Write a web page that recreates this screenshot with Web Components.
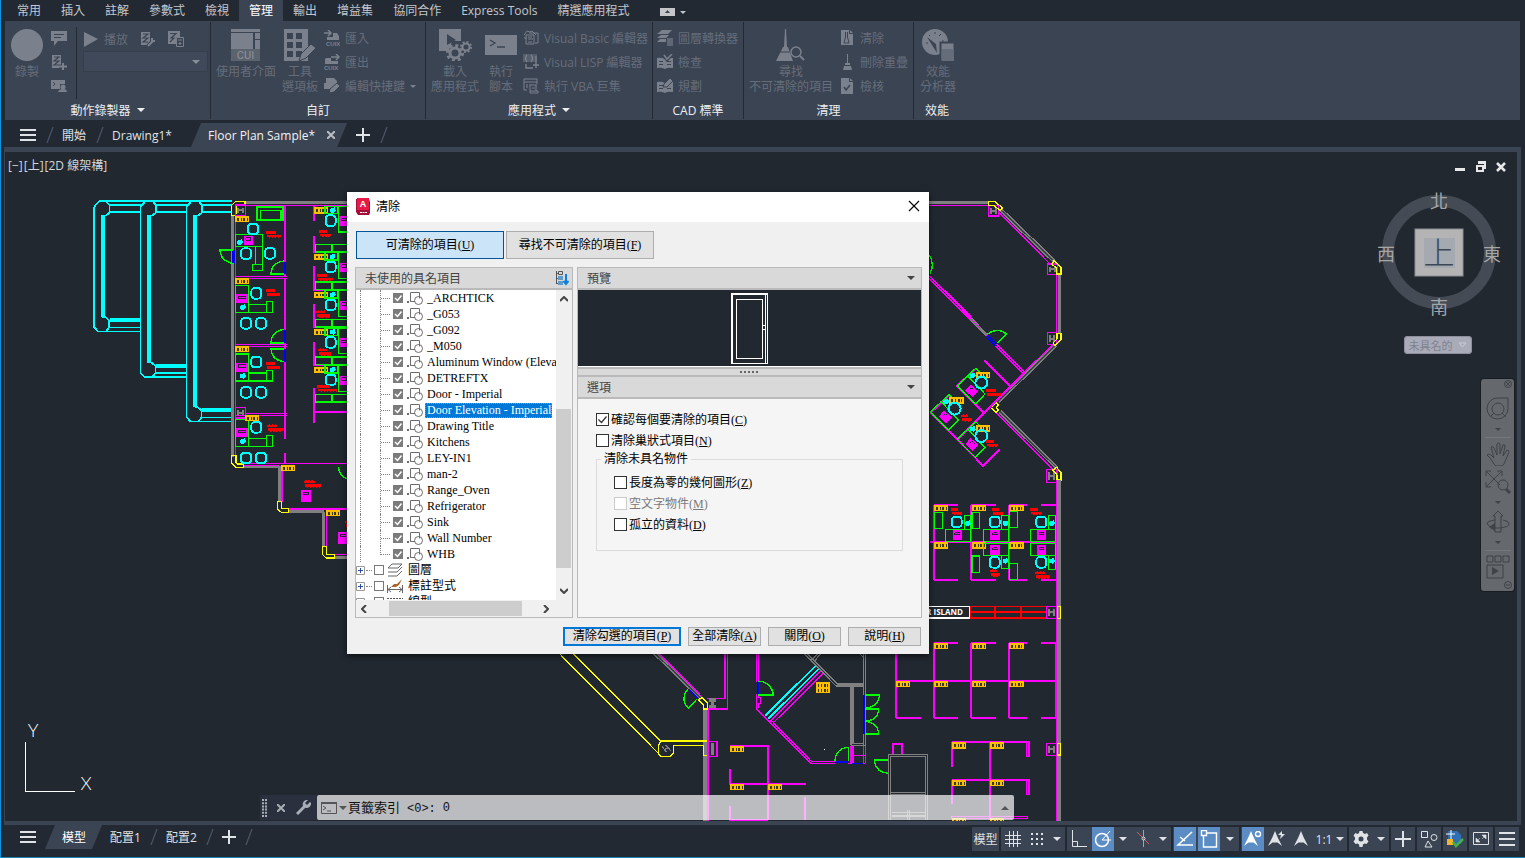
<!DOCTYPE html>
<html lang="zh-Hant">
<head>
<meta charset="utf-8">
<title>Floor Plan Sample</title>
<style>
html, body { margin: 0; height: 100%; background: #222933; }
body { font: 12px/15px "Open Sans", "Noto Sans CJK TC", sans-serif; overflow: hidden; }
</style>
</head>
<body>
<cad-app></cad-app>

<script>
/* ---------- base ---------- */
class UiElement extends HTMLElement {
  constructor() {
    super();
    this.attachShadow({ mode: 'open' });
  }
  connectedCallback() {
    if (!this.shadowRoot.firstChild) {
      this.shadowRoot.innerHTML =
        '<style>*{box-sizing:border-box}button{font:inherit;color:inherit;background:none;border:0;padding:0;margin:0}' +
        this.css() + '</style>' + this.html();
    }
  }
  css() { return ''; }
  html() { return '<slot></slot>'; }
}

/* ---------- icons ---------- */
const macroDoc = '<path d="M1 1h9v13H1z"/><path d="M3 3h5l-5 4h5l-5 4h5" fill="none" stroke="#3b4453" stroke-width="1.2"/>';
const person = 'M7 0l2.500 6 4.500 9-4.500-3.500h-5L0 15 4.500 6z';
const ICONS = {
  record: [34, 34, '<circle cx="17" cy="17" r="16"/>'],
  chat: [16, 16, '<path d="M0 1h16v10H7l-4 5v-5H0z"/><path d="M3 4.500h10M3 7.500h7" stroke="#3b4453"/>'],
  macroAdd: [16, 16, macroDoc + '<path d="M12 9v7M8 12.500h8" stroke="#3b4453" stroke-width="4"/><path d="M12 9v7M8 12.500h8" stroke="currentColor" stroke-width="2"/>'],
  macroUser: [16, 16, '<path d="M0 2h14v4H9v5H0z"/><path d="M2 4l2 2-2 2" fill="none" stroke="#3b4453"/><circle cx="12" cy="9" r="2.500"/><path d="M7 14q1-3 5-3t4 3z"/>'],
  play: [16, 16, '<path d="M1 1l14 7-14 8z"/>'],
  macroWrench: [16, 16, macroDoc + '<path d="M8 15l5-5M12 7v3h3" fill="none" stroke="#3b4453" stroke-width="4"/><path d="M8 15l5-5M12 7v3h3" fill="none" stroke="currentColor" stroke-width="2"/>'],
  macroCalc: [16, 16, '<path d="M0 0h12v6H8v7H0z"/><path d="M2 2.500h6L3 7h3l-4 4" fill="none" stroke="#3b4453" stroke-width="1.200"/><path d="M8.500 6.500h7v9h-7zM10 9h4M12 11v3M10.500 12.500h3" fill="none" stroke="currentColor"/>'],
  cui: [30, 32, '<path d="M0 0h29v3H0zM0 4h22v16H0zM24 4h5v6h-5zM24 11h5v9h-5z"/><path d="M0 20h29v12H0z" opacity=".5"/><text x="14.500" y="30" text-anchor="middle" font-family="Roboto" font-size="11" fill="#8f949d">CUI</text>'],
  palette: [32, 32, '<path fill-rule="evenodd" d="M0 0h24v32H0zM3 4v6h6V4zm9 0v6h6V4zM3 13v6h6v-6zm9 0v6h6v-6zM3 22v6h6v-6zm9 0v6h6v-6z"/><path d="M17 25l10-10 5 4-10 10-7 3z" stroke="#3b4453"/>'],
  imp: [16, 16, '<path d="M0 3h7M4 0l3 3-3 3" fill="none" stroke="currentColor" stroke-width="1.500"/><path d="M9 3h4l2 3v4H3V7h6z"/><text x="2" y="16" font-family="Liberation Sans" font-size="6" font-weight="700" fill="currentColor">CUIX</text>'],
  exp: [16, 16, '<path d="M7 3h8M12 0l3 3-3 3" fill="none" stroke="currentColor" stroke-width="1.500"/><path d="M2 4h5v3h7v3H1V5z"/><text x="0" y="16" font-family="Liberation Sans" font-size="6" font-weight="700" fill="currentColor">CUIX</text>'],
  alias: [16, 16, '<path d="M2 0h8l3 3v2H2zM0 5h12v6H0z"/><path d="M5 15l1-4 7-6 3 3-6 6z" stroke="#3b4453"/>'],
  loadApp: [33, 32, '<path d="M0 0h22v12h-9l-3 10H0z"/><path d="M8 5l9 6-9 5z" fill="#3b4453"/><g fill="none" stroke="currentColor"><circle cx="16" cy="24" r="5" stroke-width="3"/><circle cx="16" cy="24" r="7.500" stroke-width="3" stroke-dasharray="3 2.900"/><circle cx="27" cy="18" r="3.500" stroke-width="2"/><circle cx="27" cy="18" r="5" stroke-width="2" stroke-dasharray="2 1.900"/></g>'],
  script: [32, 32, '<path d="M0 6h32v20H0z"/><path d="M5 11l5 3-5 3M12 18h8" fill="none" stroke="#3b4453" stroke-width="1.300"/>'],
  vb: [16, 16, '<path d="M1 5l3-4 3 1 2-1 4 4M3 5h8v9H3zM1 8h3M6 3h9v10h-3M5 7h4M5 9h5M5 12h4" fill="none" stroke="currentColor"/>'],
  lisp: [16, 16, '<path d="M0 0h14v8H0z" opacity=".45"/><path d="M4 1q-3 3 0 7M8 1q3 3 0 7M13 2v7M10 11h6M3 10v4h7M13 9v5" fill="none" stroke="currentColor" stroke-width="1.400"/>'],
  vba: [16, 16, '<path d="M1 1h13v3H1zM1 4v8h3M14 4v2M6 7h8M3 7h2M3 9h2M7 7v8h8v-2H7M13 7v6M9 10h3" fill="none" stroke="currentColor"/>'],
  layers: [16, 16, '<path d="M5 0h10l-4 4H0zM4 5h8l-3 3H0zM3 9h6v3H0z"/><path d="M10 8h6v8h-6z" opacity=".6"/>'],
  check: [16, 16, '<path fill-rule="evenodd" d="M0 4q4-1 8 1 3-2 8-1v10q-5-1-8 1-4-2-8-1zM2 7v1h4V7zm0 3v1h4v-1zm8-3v1h4V7zm0 3v1h4v-1z"/><path d="M7 1l3 4 5-5" fill="none" stroke="#3b4453" stroke-width="4"/><path d="M7 1l3 4 5-5" fill="none" stroke="currentColor" stroke-width="1.500"/>'],
  plan: [16, 16, '<path fill-rule="evenodd" d="M0 4q4-1 8 1 3-2 8-1v10q-5-1-8 1-4-2-8-1zM2 7v1h4V7zm0 3v1h4v-1zm8 0v1h4v-1z"/><path d="M6 9l1-3 6-6 3 3-6 6z" stroke="#3b4453"/>'],
  broom: [30, 32, '<path d="M9 0h1l1 18h-3zM7 18h5l5 14H0z"/><path d="M4 23h11" stroke="#3b4453"/><circle cx="20" cy="23" r="5" fill="#3b4453" stroke="currentColor" stroke-width="1.500"/><path d="M24 27l4 4" stroke="currentColor" stroke-width="2"/>'],
  purge: [16, 16, '<path d="M2 0h8v4h4v11H2z"/><path d="M11 0l3 3h-3z"/><path d="M6.500 2v5L5 13h5L8.500 7V2" fill="none" stroke="#3b4453"/>'],
  overkill: [16, 16, '<path d="M8.500 0v9" stroke="currentColor"/><path d="M6 9h5v2H6zM5 12h7l1 4H4z"/>'],
  audit: [16, 16, '<path d="M2 0h8v4h4v12H2zM11 0l3 3h-3z"/><path d="M5 9l2 3 4-5" fill="none" stroke="#3b4453" stroke-width="1.500"/>'],
  perf: [32, 32, '<circle cx="13" cy="13" r="13"/><path d="M5 8l9 7 1 9z" fill="#3b4453"/><path d="M4 14h2M13 3v2M19 5l-2 2M7 6l1 1M22 12h-2" stroke="#3b4453"/><path d="M18.500 13.500h14v19h-14z" stroke="#3b4453" stroke-width="2"/><path d="M20 20h12v12H20z" fill="#666d7a"/>'],
  down: [8, 4, '<path d="M0 0h8l-4 4z"/>'],
  downSmall: [6, 3, '<path d="M0 0h6l-3 3z"/>'],
  menu: [16, 12, '<path d="M0 0h16v2H0zM0 5h16v2H0zM0 10h16v2H0z"/>'],
  plus: [14, 14, '<path d="M6 0h2v14H6zM0 6h14v2H0z"/>'],
  close: [8, 8, '<path d="M0 0l8 8M8 0l-8 8" stroke="currentColor" stroke-width="2"/>'],
  slash: [8, 16, '<path d="M7 0L1 16" stroke="#4b5464" stroke-width="1.300"/>'],
  collapse: [15, 8, '<path d="M0 0h15v8H0z" fill="#c4c6c9"/><path d="M5 5h5l-2.500-3z" fill="#3b4453"/>'],
  grid: [16, 16, '<path d="M4.500 0v16M8.500 0v16M12.500 0v16M0 4.500h16M0 8.500h16M0 12.500h16" stroke="currentColor"/>'],
  snap: [14, 14, '<path d="M1 2h12M1 7h12M1 12h12" stroke="currentColor" stroke-width="2" stroke-dasharray="2 3"/>'],
  ortho: [16, 18, '<path d="M1.500 0v16.500H16M1 11.500h5.500V16" fill="none" stroke="currentColor"/>'],
  polar: [18, 18, '<circle cx="8" cy="10" r="6.500" fill="none" stroke="currentColor" stroke-width="1.500"/><path d="M8 10h9M8 10l8-9" fill="none" stroke="currentColor"/>'],
  iso: [14, 18, '<path d="M1 2l12 12" stroke="#e05a5a"/><path d="M7.500 0v7M7.500 10v7" stroke="#59d17a"/><circle cx="7.500" cy="8.500" r="1.500" fill="none" stroke="currentColor"/>'],
  track: [18, 16, '<path d="M16 1L2 14h15M9 10l-5-4" fill="none" stroke="currentColor" stroke-width="1.500"/>'],
  osnap: [18, 18, '<path d="M3.500 6v11h13V3H7M1.500.500h5v5h-5z" fill="none" stroke="currentColor" stroke-width="1.400"/>'],
  annoVis: [18, 16, '<path d="' + person + '"/><circle cx="14" cy="3" r="2.500" fill="none" stroke="currentColor" stroke-width="1.400"/>'],
  annoAuto: [18, 16, '<path d="' + person + '"/><path d="M14 0l-4 4h3l-1 4 5-5h-3z"/>'],
  anno: [14, 16, '<path d="' + person + '"/>'],
  gear: [16, 16, '<path fill-rule="evenodd" d="M6.500 0h3l.5 2 2 1 2-1 1.500 2.500-1.500 2v2l1.500 2L13.500 13l-2-.5L10 13.500 9.500 16h-3L6 13.500 4.500 12.500 2.500 13 .5 10.500l1.500-2v-2L.5 4.500 2.500 2l2 1L6 2zM8 5.500a2.500 2.500 0 1 0 0 5 2.500 2.500 0 0 0 0-5z"/>'],
  cross: [16, 16, '<path d="M8 0v16M0 8h16" stroke="currentColor" stroke-width="2"/>'],
  shapes: [18, 18, '<path d="M1.500 1.500h6v6h-6zM8 11l4 6H5z" fill="none" stroke="currentColor"/><circle cx="14" cy="7.500" r="3" fill="none" stroke="currentColor"/>'],
  status: [18, 18, '<path d="M2 1h9l4 4v9H2z" fill="#2f6fb4"/><path d="M5 0v9M0 4h9" stroke="#fff"/><path d="M1 9h6v6H1z" fill="#f7b32b"/><path d="M7 12l3 4 7-7" fill="none" stroke="#43b049" stroke-width="2.500"/>'],
  full: [16, 14, '<path d="M.5.500h15v12H.5z" fill="none" stroke="currentColor"/><path d="M9 3h4v4zM3 6v4h4zM12 4l-3 3M4 9l3-3" stroke="currentColor" stroke-width=".6"/>'],
  lines: [16, 16, '<path d="M0 1h16v2H0zM0 7h16v2H0zM0 13h16v2H0z"/>'],
  block: [16, 13, '<path d="M3.500.500h9v6M8 9.500H3.500zM3.500.500v9H7" fill="none" stroke="#6d6d6d"/><circle cx="11.500" cy="8.500" r="4" fill="none" stroke="#6d6d6d"/><path d="M0 9h2v2H0z" fill="#6d6d6d"/>'],
  layer: [16, 15, '<path d="M5 1h10l-4 4H1zM1 9h9l5-5M1 13h9l5-5" fill="none" stroke="#666"/>'],
  dim: [16, 14, '<path d="M.5 6v8M15.500 6v8M1 10.500h14M4 8l-3 2.500L4 13M12 8l3 2.500-3 2.500" fill="none" stroke="#666"/><path d="M15 0l-5 5-3 0-3 3 5 0 3-2z" fill="#a5672b"/>'],
  ltype: [16, 14, '<path d="M0 3.500h16" stroke="#555" stroke-dasharray="2 1"/><path d="M0 7.500h16M0 11.500h16" stroke="#555" stroke-dasharray="4 2"/>'],
  sort: [14, 16, '<path d="M1.500 1v13M1 3.500h2M1 8.500h2M1 13.500h2" stroke="#555" fill="none"/><path d="M3.500 1.500h4v3h-4z" fill="none" stroke="#555"/><path d="M3 6h5v4H3zM3 11h5v4H3z" fill="#5d9ccc"/><path d="M11 4v9M8.500 11l2.500 3 2.500-3" fill="none" stroke="#0c7fe0" stroke-width="2"/>'],
  chevUp: [8, 6, '<path d="M0 5l4-4 4 4" fill="none" stroke="#444" stroke-width="2"/>'],
  chevDown: [8, 6, '<path d="M0 1l4 4 4-4" fill="none" stroke="#444" stroke-width="2"/>'],
  chevLeft: [6, 8, '<path d="M5 0L1 4l4 4" fill="none" stroke="#444" stroke-width="2"/>'],
  chevRight: [6, 8, '<path d="M1 0l4 4-4 4" fill="none" stroke="#444" stroke-width="2"/>'],
  dlgClose: [12, 12, '<path d="M1 1l10 10M11 1L1 11" stroke="#000" stroke-width="1.100"/>'],
  app: [14, 17, '<path d="M1 1h12l1 3v11l-1 2H2l-2-3V1z" fill="#a30f38"/><path d="M1 0h12v12H1z" fill="#e51b46"/><text x="7" y="9" text-anchor="middle" font-family="Liberation Sans" font-weight="700" font-size="9" fill="#fff">A</text><path d="M4 14.500h7" stroke="#fff" stroke-dasharray="2 .5"/>'],
  grip: [6, 18, '<path d="M1 0v18M4 0v18" stroke="#a9adb5" stroke-width="2" stroke-dasharray="2 1.200"/>'],
  wrench: [15, 15, '<path d="M1 14l8-8" stroke="currentColor" stroke-width="3"/><path d="M14 2l-3 3-2-2 3-3a4.500 4.500 0 0 0-5 6l3 2a4.500 4.500 0 0 0 5-5z"/>'],
  prompt: [16, 12, '<path d="M.5.500h15v11H.5z" fill="none" stroke="#555"/><path d="M0 0h16v2H0z" fill="#555"/><path d="M2 4l3 2-3 2M6 9h4" fill="none" stroke="#555"/>'],
  winMin: [12, 4, '<path d="M1 0h10v3H1z"/>'],
  winMax: [12, 12, '<path d="M3 0h8v8H9V3H3zM1 4h8v7H1zm2 2v3h4V6z" fill-rule="evenodd"/>'],
  winClose: [10, 10, '<path d="M1 1l8 8M9 1L1 9" stroke="currentColor" stroke-width="2.500"/>'],
  wheel: [24, 24, '<path d="M12 1h10v11a10.500 10.500 0 1 1-10-11z" fill="none" stroke="currentColor"/><circle cx="12" cy="12" r="6" fill="none" stroke="currentColor"/><path d="M8 16l-4 4M16 16l4 4" stroke="currentColor"/>'],
  hand: [24, 24, '<path d="M8 22q-3-6-7-9 1-2 4 0l3 3L5 5q2-1 3 1l3 7L11 2q2-2 3 0v10l3-9q2-1 2 1l-2 10 4-6q2 0 2 2l-5 12q-1 2-3 2H10z" fill="none" stroke="currentColor"/>'],
  zoomExt: [26, 24, '<path d="M2 2l13 13M16 2L2 16M1 6V1h5M12 1h5v5M1 12v5h5" fill="none" stroke="currentColor"/><circle cx="18" cy="15" r="5" fill="none" stroke="currentColor"/><path d="M21 19l4 4" stroke="currentColor" stroke-width="3"/>'],
  orbit: [24, 24, '<path d="M9 22h6V6h2l-5-5-5 5h2z" fill="none" stroke="currentColor"/><path d="M17 10q6 1 6 4t-9 4H5M9 10q-8 1-8 4l4 3" fill="none" stroke="currentColor"/><path d="M9 13v8l-6-4z"/>'],
  motion: [24, 24, '<path d="M1 1h6v6H1zM9 1h6v6H9zM17 1h6v6h-6zM1 10h16v13H1z" fill="none" stroke="currentColor"/><path d="M6 12l7 4-7 4z"/>'],
  bullet: [8, 8, '<circle cx="4" cy="4" r="3.500" fill="none" stroke="currentColor"/><path d="M2 2l4 4M6 2L2 6" stroke="currentColor"/>'],
  minusDot: [8, 8, '<circle cx="4" cy="4" r="3.500" fill="none" stroke="currentColor"/><path d="M2 4h4" stroke="currentColor"/>']
};
class UiIcon extends UiElement {
  css() { return ':host{display:inline-flex;flex:none}svg{display:block;fill:currentColor}'; }
  html() {
    const [w, h, body] = ICONS[this.getAttribute('name')];
    return `<svg width="${w}" height="${h}" viewBox="0 0 ${w} ${h}" aria-hidden="true">${body}</svg>`;
  }
}
customElements.define('ui-icon', UiIcon);
const icon = n => `<ui-icon name="${n}"></ui-icon>`;

/* ---------- menu tabs ---------- */
customElements.define('menu-tabs', class extends UiElement {
  css() { return `
    :host{display:flex;height:21px;padding-left:7px;color:#c3c7cd;align-items:stretch}
    button{padding:0 10px;white-space:nowrap}
    .on{background:#3b4453;color:#fff}
    .end{display:flex;align-items:center;gap:5px;padding:3px 0 0 21px}`; }
  html() {
    return ['常用', '插入', '註解', '參數式', '檢視', '管理', '輸出', '增益集', '協同合作', 'Express Tools', '精選應用程式']
      .map(t => `<button${t === '管理' ? ' class="on"' : ''}>${t}</button>`).join('') +
      `<button class="end" aria-label="功能區顯示">${icon('collapse')}${icon('downSmall')}</button>`;
  }
});

/* ---------- ribbon ---------- */
customElements.define('ribbon-panel', class extends UiElement {
  css() { return `
    :host{display:flex;flex-direction:column;flex:none;height:97px;margin-top:1px;border-right:1px solid #222933}
    :host([last]){border-right:0}
    .body{display:flex;height:79px;padding:4px 0 0 4px}
    .title{display:flex;height:18px;align-items:center;justify-content:center;gap:6px;color:#eceef0;white-space:nowrap}`; }
  html() {
    return `<div class="body"><slot></slot></div><div class="title"><span>${this.getAttribute('heading')}</span>${this.hasAttribute('more') ? icon('down') : ''}</div>`;
  }
});
customElements.define('ribbon-large', class extends UiElement {
  css() { return `
    :host{display:block;flex:none}
    button{display:flex;flex-direction:column;align-items:center;width:100%;padding-top:3px;color:#7b818c}
    ui-icon{height:32px;margin-bottom:3px;align-items:center}
    span{color:#666d7a;line-height:15px;white-space:nowrap}`; }
  html() {
    return `<button disabled>${icon(this.getAttribute('icon'))}${this.getAttribute('label').split('|').map(t => `<span>${t}</span>`).join('')}</button>`;
  }
});
customElements.define('ribbon-small', class extends UiElement {
  css() { return `
    :host{display:block}
    button{display:flex;align-items:center;height:24px;gap:5px;color:#7b818c}
    span{color:#666d7a;white-space:nowrap}`; }
  html() {
    const l = this.getAttribute('label');
    return `<button disabled aria-label="${l || '工具'}">${icon(this.getAttribute('icon'))}${l ? `<span>${l}</span>` : ''}${this.hasAttribute('more') ? icon('downSmall') : ''}</button>`;
  }
});
customElements.define('ribbon-bar', class extends UiElement {
  css() { return `
    :host{display:flex;height:99px;margin:0 5px;background:#3b4453}
    .col{display:flex;flex-direction:column;flex:none}
    .row{display:flex;height:24px;gap:12px}
    .rec{border-left:1px solid #222933;margin:1px 0 5px 9px;padding-left:6px;height:72px}
    select{appearance:none;display:block;width:125px;height:21px;background:#434c5e;border:1px solid #343c49}
    .pick{position:relative}
    .pick ui-icon{position:absolute;right:8px;top:9px;color:#888e98}
    .w36{width:36px}.w40{width:40px}.w44{width:44px}.w48{width:48px}.w60{width:60px}.w84{width:84px}`; }
  html() { return `
    <ribbon-panel heading="動作錄製器" more style="width:206px">
      <ribbon-large class="w36" icon="record" label="錄製"></ribbon-large>
      <div class="col" style="padding-left:6px">
        <ribbon-small icon="chat"></ribbon-small><ribbon-small icon="macroAdd"></ribbon-small><ribbon-small icon="macroUser"></ribbon-small>
      </div>
      <div class="rec">
        <div class="row"><ribbon-small icon="play" label="播放"></ribbon-small><ribbon-small icon="macroWrench"></ribbon-small><ribbon-small icon="macroCalc"></ribbon-small></div>
        <div class="pick"><select disabled aria-label="動作巨集"><option></option></select>${icon('down')}</div>
      </div>
    </ribbon-panel>
    <ribbon-panel heading="自訂" style="width:215px">
      <ribbon-large class="w60" icon="cui" label="使用者介面" style="margin-left:1px"></ribbon-large>
      <ribbon-large class="w48" icon="palette" label="工具|選項板"></ribbon-large>
      <div class="col">
        <ribbon-small icon="imp" label="匯入"></ribbon-small><ribbon-small icon="exp" label="匯出"></ribbon-small><ribbon-small icon="alias" label="編輯快捷鍵" more></ribbon-small>
      </div>
    </ribbon-panel>
    <ribbon-panel heading="應用程式" more style="width:227px">
      <ribbon-large class="w48" icon="loadApp" label="載入|應用程式" style="margin-left:1px"></ribbon-large>
      <ribbon-large class="w44" icon="script" label="執行|腳本"></ribbon-large>
      <div class="col">
        <ribbon-small icon="vb" label="Visual Basic 編輯器"></ribbon-small><ribbon-small icon="lisp" label="Visual LISP 編輯器"></ribbon-small><ribbon-small icon="vba" label="執行 VBA 巨集"></ribbon-small>
      </div>
    </ribbon-panel>
    <ribbon-panel heading="CAD 標準" style="width:91px">
      <div class="col">
        <ribbon-small icon="layers" label="圖層轉換器"></ribbon-small><ribbon-small icon="check" label="檢查"></ribbon-small><ribbon-small icon="plan" label="規劃"></ribbon-small>
      </div>
    </ribbon-panel>
    <ribbon-panel heading="清理" style="width:170px">
      <ribbon-large class="w84" icon="broom" label="尋找|不可清除的項目" style="margin-left:1px"></ribbon-large>
      <div class="col" style="padding-left:6px">
        <ribbon-small icon="purge" label="清除"></ribbon-small><ribbon-small icon="overkill" label="刪除重疊"></ribbon-small><ribbon-small icon="audit" label="檢核"></ribbon-small>
      </div>
    </ribbon-panel>
    <ribbon-panel heading="效能" last style="width:46px">
      <ribbon-large class="w40" icon="perf" label="效能|分析器"></ribbon-large>
    </ribbon-panel>`; }
});

/* ---------- tab strips ---------- */
customElements.define('file-tabs', class extends UiElement {
  css() { return `
    :host{display:flex;align-items:center;height:27px;padding:3px 0 0 20px;color:#dfe2e6}
    button{display:flex;align-items:center;white-space:nowrap}
    nav{display:flex;align-items:center;height:24px}
    ui-icon[name=slash]{margin:0 8px 0 10px}
    .tab{display:flex;align-items:center;height:24px;gap:12px;padding:0 12px 0 17px;margin:0 9px 0 19px;background:#3b4453;clip-path:polygon(10px 0,100% 0,calc(100% - 10px) 100%,0 100%)}
    .tab{color:#f1f2f4}.tab button:last-child{color:#b9bdc4}`; }
  html() { return `
    <button aria-label="選單">${icon('menu')}</button>${icon('slash')}
    <nav><button>開始</button>${icon('slash')}<button>Drawing1*</button>
    <div class="tab"><button>Floor Plan Sample*</button><button aria-label="關閉">${icon('close')}</button></div></nav>
    <button aria-label="新圖面">${icon('plus')}</button>${icon('slash')}`; }
});
customElements.define('layout-tabs', class extends UiElement {
  css() { return `
    :host{display:flex;align-items:center;height:24px;padding-left:20px;color:#dfe2e6}
    button{display:flex;align-items:center;white-space:nowrap}
    ui-icon[name=slash]{margin:0 8px 0 9px}
    .on{height:24px;padding:0 16px 0 17px;margin:0 8px 0 9px;background:#3b4453;color:#fff;clip-path:polygon(10px 0,100% 0,calc(100% - 10px) 100%,0 100%)}`; }
  html() { return `
    <button aria-label="選單">${icon('menu')}</button><button class="on">模型</button>
    <button>配置1</button>${icon('slash')}<button>配置2</button>${icon('slash')}
    <button aria-label="新配置">${icon('plus')}</button>${icon('slash')}`; }
});
customElements.define('status-bar', class extends UiElement {
  css() { return `
    :host{display:flex;gap:2px;height:24px;color:#dfe2e6}
    div{display:flex;background:#3b4453}
    button{display:flex;align-items:center;justify-content:center;width:24px;height:24px;white-space:nowrap}
    .a{width:16px}.a2{width:18px}.t{width:27px}
    .s{width:34px;gap:4px}
    .on{background:#5b8dc4;border:0 solid #3b4453;border-width:0 1px;color:#fff}`; }
  html() {
    const b = (n, l, c = '') => `<button class="${c}" aria-label="${l}">${icon(n)}</button>`;
    const d = (l, c = 'a') => b('down', l, c);
    return `<div><button class="t">模型</button></div>
    <div>${b('grid', '格線')}${b('snap', '鎖點')}${d('鎖點選項')}</div>
    <div>${b('ortho', '正交')}${b('polar', '極座標', 'on')}${d('極座標選項')}${b('iso', '等角')}${d('等角選項')}</div>
    <div>${b('track', '追蹤', 'on')}${b('osnap', '物件鎖點', 'on')}${d('物件鎖點選項', 'a2')}</div>
    <div>${b('annoVis', '註解可見性', 'on')}${b('annoAuto', '自動比例')}${b('anno', '註解比例')}<button class="s"><span>1:1</span>${icon('down')}</button></div>
    <div>${b('gear', '工作區')}${d('工作區選項')}</div>
    <div>${b('cross', '註解監視')}</div><div>${b('shapes', '隔離物件')}</div><div>${b('status', '硬體加速')}</div><div>${b('full', '清爽螢幕')}</div><div>${b('lines', '自訂')}</div>`;
  }
});

/* ---------- floor plan ---------- */
const P = (c, d) => `<path class="${c}" d="${d}"/>`;
const R = (c, x, y, x2, y2) => `<rect class="${c}" x="${x}" y="${y}" width="${x2 - x}" height="${y2 - y}"/>`;
const each = (list, f) => list.map(a => f(...a)).join('');
const tag = (x, y) => `<rect x="${x}" y="${y}" width="43" height="19" fill="#ffbf00"/><path d="M${x + 6} ${y + 10}h32" stroke="#3b3a22" stroke-width="8" stroke-dasharray="5 6 3 5 6 4"/>`;
const chair = (x, y) => `<rect x="${x - 15}" y="${y - 16}" width="30" height="32" rx="11" fill="none" stroke="#0ff" stroke-width="6"/>`;
const phone = (x, y) => `<path d="M${x - 8} ${y - 5}l14-4 3 10-6 7-11-2z" fill="#0ff"/>`;
const mon = (x, y, w = 30, h = 28) => `<rect x="${x}" y="${y}" width="${w}" height="${h}" fill="#f0f"/><path d="M${x + 7} ${y + 7}h${w - 14}v7h-${w - 14}z" fill="none" stroke="#212830" stroke-width="3"/>`;
const name = (x, y, w) => `<path d="M${x} ${y + 6}h${Math.round(w * .65)}M${x + 3} ${y + 17}h${w - 3}" stroke="#f00" stroke-width="8"/><path d="M${x + 5} ${y + 3}h${Math.round(w * .5)}M${x + 10} ${y + 21}h${w - 12}" stroke="#f00" stroke-width="4" stroke-dasharray="4 5"/>`;
const col = (x, y, w = 30, h = 32) => R('m', x, y, x + w, y + h) + `<path class="w" style="stroke-width:6" d="M${x + 8} ${y + 8}v${h - 15}M${x + w - 8} ${y + 8}v${h - 15}M${x + 8} ${y + h / 2}h${w - 16}"/>`;

const west = () => {
  let s = '';
  /* cyan duct runs */
  s += P('c', 'M66 34H455M88 45H182M228 45H320M365 45H455M88 67H182M228 67H320M365 67H455');
  for (const [x, b, end] of [[43, 380, 182], [182, 517, 320], [320, 650, 457]]) {
    s += P('c', `M${x} 50l14-16h22l10 12v22l-12 9h-9M${x} 50V${b + 32}l12 13h22l11-13v-20l-12-11h-9M${x + 46} ${b + 33}H${end}M${x + 30} ${b + 45}H${end}`);
    s += P('c k', `M${x + 25} 76V${b + 2}M${x + 46} ${b + 11}H${end}`);
  }
  /* outer walls */
  s += P('w', 'M458 77V800M495 38H810M490 829H598M598 829V935M626 965H731M731 965V1070M764 1102H810');
  s += P('m', 'M467 77V797M467 46H810M490 821H810M490 827H597M606 829V935M626 957H810M740 965V1070M764 1094H810');
  s += P('y', 'M455 77V46l12-12h28v12h-25l-3 31zM455 797V820l12 12h24v-10h-19l-4-4V797zM593 935v22l11 10h22v-11h-19l-2-2v-19zM727 1069v24l11 11h26v-10h-22l-3-3v-22z');
  s += col(467, 45) + col(467, 652);
  /* rooms */
  s += P('m k', 'M616 46V215M616 252V260M616 265V420M616 458V477M616 515V746M616 789V821');
  s += P('m', 'M467 259H620M467 265H620M467 463H620M467 469H620M497 671H620M467 677H620');
  s += P('b', 'M616 215V252M616 420V458M616 477V515M461 180V222');
  s += P('g k', 'M417 181H460M571 252H613M571 459H613M571 476H613');
  s += P('g', 'M420 182q3 34 42 39M573 250q3-34 40-37M573 456q3-34 40-38M573 478q3 34 40 37M775 831q3 28 25 35');
  s += R('g k', 531, 50, 610, 91) + R('g', 541, 61, 603, 91) + R('g', 467, 133, 548, 170) + R('g', 526, 170, 548, 223) + R('g', 517, 223, 548, 242);
  for (const y of [0, 206, 402]) {
    s += R('g', 467, 286 + y, 506, 367 + y) + R('g', 506, 343 + y, 560, 367 + y) + R('g', 560, 335 + y, 578, 367 + y);
    s += mon(468, 312 + y, 36) + phone(489, 352 + y) + chair(529, 310 + y);
  }
  s += each([[519, 117], [498, 191], [570, 190], [498, 400], [543, 400], [498, 607], [543, 607], [498, 804], [543, 804]], chair);
  s += mon(491, 137, 28) + phone(480, 157);
  /* open cubicles */
  s += P('m k', 'M702 47V93M702 137V190M702 229V303M702 341V415M702 455V528M702 595V698M702 667H810');
  s += P('m', 'M702 187H810M702 301H810M702 413H810M702 526H810');
  for (const y of [49, 188, 302, 414, 527]) {
    s += tag(702, y + 3) + R('g', 735, y, 773, y + 22) + R('g', 776, y, 820, y + 77) + phone(758, y + 12) + chair(752, y + 43) + mon(778, y + 30);
  }
  for (const y of [163, 276, 388, 501, 613]) s += R('g', 706, y, 820, y + 23) + P('g k', `M755 ${y}v23`);
  s += each([[465, 78], [465, 264], [465, 468], [495, 675], [603, 825], [738, 960]], tag);
  s += mon(664, 900, 28, 35) + mon(775, 1026, 28, 35);
  s += each([[557, 121, 46], [717, 118, 36], [711, 250, 48], [557, 296, 44], [708, 360, 42], [714, 474, 40], [557, 515, 42], [712, 583, 60], [561, 702, 48], [671, 870, 52], [795, 990, 30]], name);
  return s;
};
const east = () => {
  let s = '';
  s += P('w', 'M28 38H205M418 252V430M418 870V940');
  s += P('w d', 'M243 60L401 212M408 465L234 635M240 664L411 834') + P('gap', 'M243 60L401 212M408 465L234 635M240 664L411 834');
  s += P('m', 'M28 46H205M409 252V430M409 877V940M236 66L388 220M400 462L312 548M230 670L398 838');
  s += col(205, 46) + col(382, 222) + col(382, 428, 28, 36) + col(380, 838, 31, 39);
  s += P('y', 'M205 34h20l22 20-7 8-18-16h-17zM395 222l7-10 21 20v20h-13v-17zM411 430h12v18l-18 20-6-9 12-12zM215 650l13-12 8 7-7 7 7 8-8 8-14-14M398 840l12-8 13 16v22h-12v-15z');
  s += P('m', 'M28 258L203 435M28 266L200 438M75 300L155 382M230 462L315 548M225 466L310 552');
  s += P('m k', 'M193 510L270 588M312 548L112 748M110 588L192 668M32 668L190 828L240 778M110 588L165 538M32 668L88 616');
  s += P('b t', 'M203 435L230 462M197 440L226 468');
  s += P('w t', 'M155 385L203 435M150 388L198 436');
  s += P('g', 'M230 460L260 432Q232 410 203 432M28 195Q45 225 30 250');
  for (const [x, y] of [[0, 0], [-80, 78], [0, 160]]) {
    s += P('g', `M${112 + x} ${588 + y}l55-53 14 14M${112 + x} ${588 + y}l54 54 29-30-54-57`);
    s += `<path d="M${136 + x} ${602 + y}l16-18 24 20-18 18z" fill="#f0f"/><path d="M${148 + x} ${600 + y}l8-7 8 8" fill="none" stroke="#212830" stroke-width="3"/>`;
    s += tag(168 + x, 546 + y - (x ? 2 : 0)) + phone(158 + x, 557 + y) + `<circle cx="${184 + x}" cy="${578 + y}" r="18" fill="none" stroke="#0ff" stroke-width="6"/>`;
  }
  s += each([[198, 596, 46], [124, 672, 32], [198, 748, 36]], name);
  return s;
};
const south = () => {
  let s = '';
  /* east perimeter */
  s += P('w', 'M1527 -30V995M465 657V995') + P('m', 'M1519 -30V995M474 657V995');
  /* upper cubicles */
  const bay = y => `M1152 ${y}h72M1264 ${y}h74M1376 ${y}h55M1474 ${y}h45`;
  s += P('m k', bay(44) + bay(270) + bay(459) + bay(684) + 'M1037 684h76M1140 156H1519M1037 573H1519M1152 44V270M1264 44V270M1376 44V270M1152 459V684M1264 459V684M1376 459V684M1517 459V684M1038 490V684');
  s += each([[1152, 45], [1266, 45], [1378, 45], [1152, 157], [1266, 157], [1378, 157], [1152, 459], [1266, 459], [1378, 459], [1038, 573], [1152, 573], [1266, 573], [1378, 573]], tag);
  s += each([[1153, 67, 1178, 116], [1266, 67, 1288, 116], [1378, 65, 1403, 112], [1186, 118, 1262, 154], [1300, 118, 1376, 154], [1441, 118, 1517, 154], [1300, 160, 1376, 197], [1441, 160, 1517, 197], [1244, 76, 1262, 118], [1355, 76, 1375, 118], [1496, 76, 1516, 118], [1355, 197, 1375, 236], [1496, 197, 1516, 238], [1266, 198, 1288, 248], [1378, 220, 1403, 268]], (a, b, c, d) => R('g', a, b, c, d));
  s += each([[1220, 96], [1334, 96], [1474, 96], [1334, 217], [1474, 217]], chair);
  s += each([[1253, 100], [1366, 100], [1506, 100], [1366, 213], [1506, 213]], phone);
  s += each([[1208, 121], [1321, 121], [1461, 121], [1321, 166], [1461, 166]], (x, y) => mon(x, y, 28, 28));
  s += each([[1203, 52, 34], [1326, 53, 34], [1440, 52, 36], [1320, 237, 30], [1455, 243, 44]], name);
  /* printer island */
  s += P('h', 'M1100 350H1260V384H1100') + R('r', 1262, 350, 1490, 385) + P('r', 'M1262 367H1490M1336 350V385M1414 350V385');
  s += col(1490, 349, 30, 36) + R('y', 1522, 349, 1532, 385) + col(1489, 760, 31, 37) + R('y', 1522, 760, 1532, 795);
  /* south-east cubicles */
  s += P('m k', 'M1205 756H1430M1206 756V830M1320 756V990M1205 870H1430M1206 870V942') + R('m', 1429, 756, 1437, 800) + R('m', 1429, 870, 1437, 914) + R('m', 1205, 979, 1433, 985);
  s += each([[1206, 757], [1320, 757], [1206, 870], [1320, 870], [1206, 984], [1320, 984]], tag);
  /* entry and diagonal wing */
  s += P('w d', 'M309 484L455 626') + P('gap', 'M309 484L455 626');
  s += P('y', 'M20 482L325 790M60 482L332 753H470M370 767H460V796H472V755M325 768V790L333 799H360L370 789V767M332 753L325 768');
  s += P('w t', 'M336 770L350 786M346 765L362 782M341 779L356 772');
  s += P('m', 'M322 484L455 620M472 626H525V484M472 657H532V484M503 755H472V799H503Z') + P('m k', 'M525 484V560M502 755V799');
  s += P('b t', 'M416 596L444 626') + P('g', 'M413 597Q390 630 415 655L440 628') + P('y', 'M445 630l12-8 16 18v17h-13v-12z');
  s += P('w', 'M487 630V650M478 630H497M478 650H497M488 760V795');
  /* central rooms */
  s += P('m', 'M620 484V575M626 484V575M620 613V657L783 820H855M626 613V622H631V640H626V655M665 692L785 815H855M660 695L812 543M668 700L820 550M903 767V820M909 767V820M940 767V820M946 767V820M903 767H946M903 796H946M895 820H946');
  s += P('c', 'M645 678L797 527M655 686L807 536');
  s += P('w t', 'M755 484L858 588H941M764 482L862 582H941M785 510L805 490M792 514L812 492M903 588V765M909 590V760H941M941 484V765M947 484V765M903 766H947M928 490L941 503');
  s += P('b', 'M943 615V732M855 817H895M1019 810V850M624 575V612') + P('b t', 'M905 821H940');
  s += P('g', 'M625 574Q662 574 670 612M989 614Q985 650 946 655M986 657Q985 690 946 694M986 733Q985 698 946 694M855 812Q858 775 895 772V812M973 812Q978 848 1015 850');
  s += P('g k', 'M625 614H671M946 614H989M946 657H986M946 733H986M973 810H1015');
  s += tag(797, 576) + tag(797, 591) + '<rect x="822" y="777" width="3" height="3" fill="#fff"/>';
  /* small room */
  s += P('w t', 'M1015 990V793H1133V990M1022 990V800H1127V990M1022 908H1127M1022 914H1127M1027 967H1125M1027 978H1125M1072 960V990M1079 960V990') + P('m k', 'M1029 793V762H1056V793');
  /* south-west cubicles */
  s += P('m k', 'M540 768H655V990M538 882H767M540 838V882M540 948V990H655M765 922V990');
  s += each([[540, 768], [540, 882], [654, 882]], tag);
  return s;
};
customElements.define('floor-plan', class extends UiElement {
  css() { return `
    :host{display:block;width:100%;height:100%}
    svg{display:block;width:100%;height:100%;shape-rendering:crispEdges}
    .m,.g,.c,.y,.b,.w,.r,.h,.gap{fill:none;stroke-width:4}
    .m{stroke:#f0f}.g{stroke:#0f0}.c{stroke:#0ff;stroke-width:5}.y{stroke:#ff0}.r{stroke:#f00;stroke-width:5}.h{stroke:#fff}
    .b{stroke:#00f;stroke-width:7}
    .w{stroke:#808080;stroke-width:10}.t{stroke-width:4}
    .d{stroke-width:12}.gap{stroke:#3a4046;stroke-width:4}
    .k{stroke-width:6}.c.k{stroke-width:12}
    text{fill:#fff;font-family:"Open Sans",sans-serif}`; }
  html() { return `<svg viewBox="5 152 1512 669" preserveAspectRatio="xMinYMin slice" aria-label="平面圖">
    <g transform="translate(80 190) scale(.33333)">${west()}</g>
    <g transform="translate(920 190) scale(.33333)">${east()}</g>
    <g transform="translate(550 490) scale(.33333)">${south()}</g>
    <text x="963" y="615" text-anchor="end" font-size="8" font-weight="700">ER ISLAND</text>
    <path d="M25.500 742V791.500H75" fill="none" stroke="#fff"/>
    <text x="33" y="737" text-anchor="middle" font-size="18" style="font-family:Lato;font-weight:300">Y</text>
    <text x="86" y="790" text-anchor="middle" font-size="18" style="font-family:Lato;font-weight:300">X</text>
  </svg>`; }
});

/* ---------- view cube and navigation bar ---------- */
customElements.define('view-cube', class extends UiElement {
  css() { return `
    :host{display:flex;flex-direction:column;align-items:center;width:130px}
    svg{display:block;font-family:"Noto Sans CJK TC",sans-serif}
    button{display:flex;align-items:center;gap:5px;height:18px;padding:0 5px;margin:12px 3px 0 0;border-radius:4px;background:#a9abb8;color:#7f8290;font-size:11px;box-shadow:inset 0 0 0 1px #8d909c;white-space:nowrap}`; }
  html() { return `<svg width="130" height="142" viewBox="0 -8 130 142">
      <circle cx="65" cy="62" r="51" fill="none" stroke="#454b54" stroke-width="12"/>
      <rect x="41" y="39" width="48" height="47" fill="#b4b4b4" stroke="#8b8e92"/><rect x="50" y="48" width="31" height="30" fill="#a5a9b0"/>
      <text x="65" y="74" text-anchor="middle" font-size="31" font-weight="300" fill="#3c4856">上</text>
      <g font-size="18" text-anchor="middle" fill="#a5a6a8"><text x="65" y="18">北</text><text x="12" y="71">西</text><text x="118" y="71">東</text><text x="65" y="124">南</text></g>
    </svg>
    <button>未具名的<svg width="9" height="6" viewBox="0 0 9 6"><path d="M1 1h7L4.500 5z" fill="none" stroke="#c9cad3"/></svg></button>`; }
});
customElements.define('nav-bar', class extends UiElement {
  css() { return `
    :host{display:flex;flex-direction:column;align-items:center;width:33px;height:212px;background:#65686c;border-radius:3px;box-shadow:0 0 0 1px #171c22;color:#3f4349}
    button{display:flex}
    .x{align-self:flex-end;margin:1px 2px 0 0}
    .c{margin:7px 0 6px}
    hr{width:26px;border:0;border-top:1px solid #75787a;margin:0 0 4px}
    .gap{height:9px}.gap2{height:4px}
    .end{align-self:flex-end;margin:auto 2px 2px 0}`; }
  html() {
    const b = (n, l, c = '') => `<button class="${c}" aria-label="${l}">${icon(n)}</button>`;
    return b('bullet', '關閉', 'x') + '<div class="gap"></div>' + b('wheel', '導覽輪') + b('downSmall', '導覽輪選項', 'c') + '<hr>' + b('hand', '平移') +
      '<div class="gap2"></div>' + b('zoomExt', '縮放') + b('downSmall', '縮放選項', 'c') + b('orbit', '環轉') + b('downSmall', '環轉選項', 'c') + '<hr>' + b('motion', '動畫') + b('minusDot', '選項', 'end');
  }
});

/* ---------- command line ---------- */
customElements.define('command-line', class extends UiElement {
  css() { return `
    :host{display:flex;height:25px}
    .tools{display:flex;align-items:center;width:57px;padding-left:2px;gap:9px;background:#2a303d;color:#a9adb5}
    button{display:flex}
    .tools ui-icon[name=wrench]{margin-left:2px}
    .line{flex:1;display:flex;align-items:center;background:rgba(255,255,255,.69);padding:0 3px 0 4px;color:#111;font-size:13px;border-radius:2px}
    .line ui-icon[name=down]{margin:0 1px 0 2px;color:#555}
    label{font-family:"Noto Sans CJK TC",sans-serif;white-space:pre}
    label span,input{font:12px "Liberation Mono",monospace}
    input{flex:1;min-width:0;border:0;padding:0 0 0 7px;margin:0;background:none;color:#111}
    label span{padding-left:7px}
    .up{transform:rotate(180deg)}`; }
  html() { return `
    <div class="tools">${icon('grip')}<button aria-label="關閉">${icon('close')}</button><button aria-label="自訂">${icon('wrench')}</button></div>
    <div class="line">${icon('prompt')}${icon('down')}<label for="cmd">頁籤索引<span>&lt;0&gt;:</span></label><input id="cmd" value="0"><button class="up" aria-label="歷程">${icon('down')}</button></div>`; }
});

/* ---------- purge dialog ---------- */
customElements.define('pane-header', class extends UiElement {
  css() { return `
    :host{display:flex;flex:none;align-items:center;justify-content:space-between;height:22px;padding:0 3px 0 9px;background:#d9d9d9;border-bottom:2px solid #bababa;color:#444;font-family:"Noto Sans CJK TC",sans-serif}
    :host([fold]){padding-right:6px}`; }
  html() { return `<span><slot></slot></span>${icon(this.hasAttribute('fold') ? 'down' : 'sort')}`; }
});
customElements.define('check-box', class extends UiElement {
  css() { return `
    :host{display:block;height:21px}
    label{display:flex;align-items:center;height:21px;gap:2px;white-space:nowrap}
    input{appearance:none;flex:none;width:13px;height:13px;margin:0;border:1px solid #333;background:#fff}
    input:checked{background:#fff url('data:image/svg+xml,<svg xmlns="http://www.w3.org/2000/svg" viewBox="0 0 11 11"><path d="M1.500 5.500l3 3 5-6" fill="none" stroke="%23333" stroke-width="1.200"/></svg>')}
    input:disabled{border-color:#ccc}
    :host([off]) label{color:#7a7a7a}`; }
  html() {
    return `<label><input type="checkbox"${this.hasAttribute('on') ? ' checked' : ''}${this.hasAttribute('off') ? ' disabled' : ''}><span><slot></slot></span></label>`;
  }
});
customElements.define('purge-tree', class extends UiElement {
  css() { return `
    :host{display:grid;grid-template-columns:minmax(0,1fr) 16px;grid-template-rows:310px 17px;background:#f0f0f0}
    ul{margin:0;padding:0;list-style:none;background:#fff;overflow:hidden}
    label{display:flex;align-items:center;height:16px;padding-left:4px;white-space:nowrap}
    label>*{flex:none}
    .g1{width:20px;height:16px;border-left:1px dotted #808080}
    .g2{width:13px;height:16px;display:flex;align-items:center;border-left:1px dotted #808080}
    .g2::after,.g0::after{content:"";width:9px;border-top:1px dotted #808080}
    li.last .g2{height:9px;align-self:flex-start;align-items:flex-end}
    input{appearance:none;width:10px;height:10px;margin:0 4px 0 0;border:1px solid #777;background:#fff}
    .leaf input{border:0;background:#7b7b7b url('data:image/svg+xml,<svg xmlns="http://www.w3.org/2000/svg" viewBox="0 0 10 10"><path d="M2 5l2.500 2.500 4-5" fill="none" stroke="white" stroke-width="1.500"/></svg>')}
    label>span:last-child{line-height:15px;padding:0 1px 0 2px;margin-left:2px}
    .sel>label>span:last-child{background:#0078d7;color:#fff;outline:1px dotted #e08a2e;outline-offset:-1px}
    .top label{padding-left:0}
    .g0{display:flex;align-items:center;width:18px}
    .g0 svg{flex:none;display:block}
    .g0::after{width:6px;margin-left:1px}
    .top ui-icon{margin:0 1px 0 -1px}
    .v,.h{display:flex;align-items:center;justify-content:space-between}
    .v{flex-direction:column;padding:6px 1px 6px 0}
    .h{padding:0 7px 0 5px}
    .v i{width:15px;height:159px;margin-top:86px}
    .h i{width:133px;height:15px}
    i{background:#cdcdcd}`; }
  html() {
    const names = ['_ARCHTICK', '_G053', '_G092', '_M050', 'Aluminum Window (Elevation)', 'DETREFTX', 'Door - Imperial', 'Door Elevation - Imperial', 'Drawing Title', 'Kitchens', 'LEY-IN1', 'man-2', 'Range_Oven', 'Refrigerator', 'Sink', 'Wall Number', 'WHB'];
    const leaf = (n, i) => `<li class="leaf${i === 7 ? ' sel' : ''}${i === 16 ? ' last' : ''}"><label><span class="g1"></span><span class="g2"></span><input type="checkbox" checked>${icon('block')}<span>${n}</span></label></li>`;
    const top = (n, ic) => `<li class="top"><label><span class="g0"><svg width="9" height="9"><path d="M.5.500h8v8h-8z" fill="#fff" stroke="#999"/><path d="M2 4.500h5M4.500 2v5" stroke="#2a4fa0"/></svg></span><input type="checkbox">${icon(ic)}<span>${n}</span></label></li>`;
    return `<ul>${names.map(leaf).join('')}${top('圖層', 'layer')}${top('標註型式', 'dim')}${top('線型', 'ltype')}</ul>
      <div class="v">${icon('chevUp')}<i></i>${icon('chevDown')}</div>
      <div class="h">${icon('chevLeft')}<i></i>${icon('chevRight')}</div>`;
  }
});
customElements.define('purge-dialog', class extends UiElement {
  css() { return `
    :host{display:block;width:582px;background:#f0f0f0;color:#000;font:12px/16px "Liberation Serif","Noto Sans CJK TC",serif;box-shadow:0 2px 6px rgba(0,0,0,.6)}
    header{display:flex;align-items:center;height:30px;padding:0 9px 2px;background:#fff;font-family:"Noto Sans CJK TC",sans-serif}
    header span{flex:1;padding-left:6px}
    header button{display:flex}
    .modes{display:flex;gap:2px;padding:9px 9px 8px}
    .modes button{width:148px;height:28px;border:1px solid #adadad;background:#e1e1e1;white-space:nowrap}
    .modes .on{background:#cce4f7;border-color:#005499}
    .cols{display:flex;gap:4px;padding:0 7px 0 8px;height:351px}
    .left{flex:0 0 218px;border:1px solid #bababa}
    .right{flex:1;display:flex;flex-direction:column;border:1px solid #bababa;min-width:0}
    .preview{display:flex;justify-content:center;background:#212830;height:77px;flex:none;border-bottom:1px solid #fff}
    .split{flex:none;display:flex;align-items:center;justify-content:center;height:10px;background:#d9d9d9;border:solid #bababa;border-width:2px 0}
    .opts{flex:1;background:#f5f5f5;padding:10px 18px 0}
    fieldset{height:100px;margin:0;border:1px solid #dcdcdc;padding:5px 17px 0}
    legend{padding:0 3px;margin-left:-13px}
    u{text-underline-offset:1px}
    footer{display:flex;justify-content:flex-end;gap:7px;padding:9px 8px 8px}
    footer button{width:73px;height:19px;line-height:15px;border:1px solid #adadad;background:#e1e1e1;white-space:nowrap}
    footer .main{width:118px;border:2px solid #0078d7}`; }
  html() { return `
    <header>${icon('app')}<span>清除</span><button aria-label="關閉">${icon('dlgClose')}</button></header>
    <div class="modes"><button class="on">可清除的項目(<u>U</u>)</button><button>尋找不可清除的項目(<u>F</u>)</button></div>
    <div class="cols">
      <section class="left"><pane-header>未使用的具名項目</pane-header><purge-tree></purge-tree></section>
      <section class="right">
        <pane-header fold>預覽</pane-header>
        <div class="preview"><svg width="38" height="76" viewBox="0 0 38 76" fill="none" stroke="#fff" shape-rendering="crispEdges"><path d="M.5 3.500h36v70H.5zM34.500 3v70M1.500 4v69M1 4.500h35M5.500 9.500h26v59h-26zM32 35.500h2v4h-2"/></svg></div>
        <div class="split"><svg width="19" height="2"><path d="M0 1h19" stroke="#666" stroke-width="2" stroke-dasharray="2 2"/></svg></div>
        <pane-header fold>選項</pane-header>
        <div class="opts">
          <check-box on>確認每個要清除的項目(<u>C</u>)</check-box>
          <check-box>清除巢狀式項目(<u>N</u>)</check-box>
          <fieldset><legend>清除未具名物件</legend>
            <check-box>長度為零的幾何圖形(<u>Z</u>)</check-box>
            <check-box off>空文字物件(<u>M</u>)</check-box>
            <check-box>孤立的資料(<u>D</u>)</check-box>
          </fieldset>
        </div>
      </section>
    </div>
    <footer><button class="main">清除勾選的項目(<u>P</u>)</button><button>全部清除(<u>A</u>)</button><button>關閉(<u>O</u>)</button><button>說明(<u>H</u>)</button></footer>`; }
});

/* ---------- drawing window and application ---------- */
customElements.define('drawing-view', class extends UiElement {
  css() { return `
    :host{display:block;position:relative;flex:1;min-height:0;margin:0 4px 0 3px;border:solid #3b4453;border-width:5px 4px 4px 1px;background:#212830;overflow:hidden;color:#d4d6d9}
    .over{position:absolute}
    .view{left:3px;top:6px;display:flex;gap:1px}
    .win{right:11px;top:9px;display:flex;align-items:center;gap:9px;color:#e8e8e8}
    .win button{display:flex}
    .win button:first-child{padding-top:5px}
    view-cube{right:13px;top:30px}
    nav-bar{right:3px;top:227px}
    command-line{left:255px;right:503px;bottom:1px}
    purge-dialog{left:342px;top:40px}`; }
  html() { return `
    <floor-plan></floor-plan>
    <div class="over view"><button>[−]</button><button>[上]</button><button>[2D 線架構]</button></div>
    <div class="over win"><button aria-label="最小化">${icon('winMin')}</button><button aria-label="還原">${icon('winMax')}</button><button aria-label="關閉">${icon('winClose')}</button></div>
    <view-cube class="over"></view-cube>
    <nav-bar class="over"></nav-bar>
    <command-line class="over"></command-line>
    <purge-dialog class="over" role="dialog" aria-label="清除"></purge-dialog>`; }
});
customElements.define('cad-app', class extends UiElement {
  css() { return `
    :host{display:flex;flex-direction:column;height:100vh;box-sizing:border-box;border-left:1px solid #0d93dd;border-bottom:1px solid #1b86b7;background:#222933}
    menu-tabs,file-tabs,layout-tabs{margin-left:-1px}
    ribbon-bar{margin-left:4px}
    .foot{display:flex;justify-content:space-between;flex:none;height:32px;padding-right:6px}
    status-bar{margin-top:2px}
    menu-tabs,ribbon-bar,file-tabs{flex:none}`; }
  html() { return `<menu-tabs></menu-tabs><ribbon-bar></ribbon-bar><file-tabs></file-tabs><drawing-view></drawing-view>
    <div class="foot"><layout-tabs></layout-tabs><status-bar></status-bar></div>`; }
});
</script>
</body>
</html>
